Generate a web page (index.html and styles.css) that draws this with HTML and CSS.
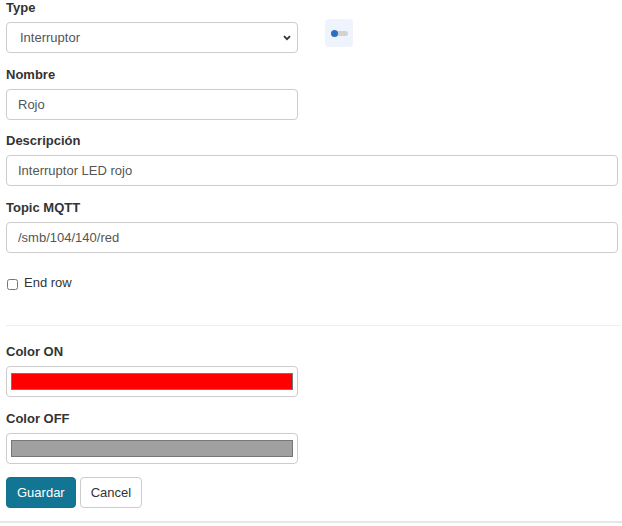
FILE: index.html
```html
<!DOCTYPE html>
<html lang="es">
<head>
<meta charset="utf-8">
<title>Editar elemento</title>
<link rel="stylesheet" href="styles.css">
</head>
<body>
<form class="form">
  <div class="type-row">
    <div class="group narrow">
      <label class="lbl">Type</label>
      <div class="select-wrap">
        <select class="ctrl select"><option>Interruptor</option></select>
        <svg class="chev" width="8" height="6" viewBox="0 0 8 6"><path d="M1 1.2 L4 4.2 L7 1.2" fill="none" stroke="#333" stroke-width="1.8"/></svg>
      </div>
    </div>
    <div class="type-icon"><span class="track"><span class="knob"></span></span></div>
  </div>

  <div class="group narrow tight">
    <label class="lbl">Nombre</label>
    <input class="ctrl" type="text" value="Rojo">
  </div>

  <div class="group wide">
    <label class="lbl">Descripción</label>
    <input class="ctrl" type="text" value="Interruptor LED rojo">
  </div>

  <div class="group wide last">
    <label class="lbl">Topic MQTT</label>
    <input class="ctrl" type="text" value="/smb/104/140/red">
  </div>

  <label class="check"><input type="checkbox" class="cb"><span>End row</span></label>

  <hr class="sep">

  <div class="group narrow">
    <label class="lbl">Color ON</label>
    <div class="ctrl color"><span class="swatch on"></span></div>
  </div>

  <div class="group narrow last">
    <label class="lbl">Color OFF</label>
    <div class="ctrl color"><span class="swatch off"></span></div>
  </div>

  <div class="actions">
    <button type="button" class="btn primary">Guardar</button>
    <button type="button" class="btn">Cancel</button>
  </div>
</form>
<div class="footer-line"></div>
</body>
</html>
```

FILE: styles.css
```css
html, body {
  margin: 0;
  padding: 0;
  background: #fff;
}
body {
  font-family: "Liberation Sans", Arial, sans-serif;
  font-size: 13px;
  color: #333;
}
.form {
  padding: 0 1px 0 6px;
  display: flex;
  flex-direction: column;
}
.type-row {
  display: flex;
  align-items: flex-start;
}
.group {
  display: flex;
  flex-direction: column;
  margin-bottom: 14px;
}
.group.tight {
  margin-bottom: 13px;
}
.group.last {
  margin-bottom: 0;
}
.narrow {
  width: 292px;
}
.wide {
  width: 612px;
}
.lbl {
  font-weight: bold;
  line-height: 16px;
  margin-bottom: 6px;
  color: #333;
}
.ctrl {
  box-sizing: border-box;
  height: 31px;
  width: 100%;
  margin: 0;
  border: 1px solid #ccc;
  border-radius: 4px;
  background: #fff;
  font-family: "Liberation Sans", Arial, sans-serif;
  font-size: 13px;
  color: #555;
  padding: 0 11px;
  outline: none;
}
.select-wrap {
  position: relative;
  display: flex;
}
.select {
  appearance: none;
  -webkit-appearance: none;
  padding-left: 13px;
}
.chev {
  position: absolute;
  right: 7px;
  top: 13px;
}
.type-icon {
  margin-left: 27px;
  margin-top: 19px;
  width: 28px;
  height: 28px;
  border-radius: 4px;
  background: #eef3fc;
  display: flex;
  align-items: center;
  justify-content: center;
}
.track {
  width: 17px;
  height: 5px;
  border-radius: 3px;
  background: #d2d2d2;
  display: flex;
  align-items: center;
  margin-top: 1px;
}
.knob {
  width: 7px;
  height: 7px;
  flex: none;
  border-radius: 50%;
  background: #2c6fbe;
}
.check {
  margin-top: 22px;
  display: flex;
  align-items: flex-start;
  line-height: 16px;
  color: #333;
}
.cb {
  width: 11px;
  height: 11px;
  margin: 4px 6px 0 1px;
}
.sep {
  margin: 34px 0 18px 0;
  border: 0;
  border-top: 1px solid #eee;
  height: 0;
}
.color {
  padding: 6px 4px;
  display: flex;
}
.swatch {
  flex: 1;
  border: 1px solid #777;
}
.swatch.on {
  background: #ff0000;
}
.swatch.off {
  background: #a0a0a0;
}
.actions {
  margin-top: 13px;
  display: flex;
  gap: 4px;
}
.btn {
  height: 31px;
  padding: 0 10px;
  border: 1px solid #ccc;
  border-radius: 4px;
  background: #fff;
  color: #333;
  font-family: "Liberation Sans", Arial, sans-serif;
  font-size: 13px;
}
.btn.primary {
  background: #137594;
  border-color: #11708e;
  color: #fff;
}
.footer-line {
  margin-top: 13px;
  height: 2px;
  background: #e7e7e7;
}
```
